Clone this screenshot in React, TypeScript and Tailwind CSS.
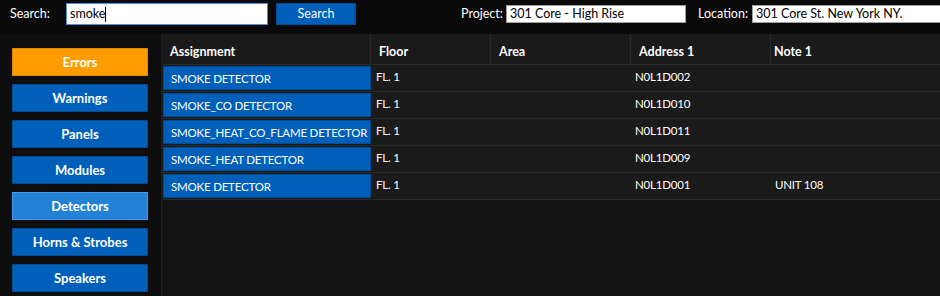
const navItems = [
  { label: 'Errors', kind: 'error' },
  { label: 'Warnings', kind: 'normal' },
  { label: 'Panels', kind: 'normal' },
  { label: 'Modules', kind: 'normal' },
  { label: 'Detectors', kind: 'active' },
  { label: 'Horns & Strobes', kind: 'normal' },
  { label: 'Speakers', kind: 'normal' },
];

const rows = [
  { assignment: 'SMOKE DETECTOR', floor: 'FL. 1', area: '', address: 'N0L1D002', note: '' },
  { assignment: 'SMOKE_CO DETECTOR', floor: 'FL. 1', area: '', address: 'N0L1D010', note: '' },
  { assignment: 'SMOKE_HEAT_CO_FLAME DETECTOR', floor: 'FL. 1', area: '', address: 'N0L1D011', note: '' },
  { assignment: 'SMOKE_HEAT DETECTOR', floor: 'FL. 1', area: '', address: 'N0L1D009', note: '' },
  { assignment: 'SMOKE DETECTOR', floor: 'FL. 1', area: '', address: 'N0L1D001', note: 'UNIT 108' },
];

function navClass(kind: string) {
  if (kind === 'error') return 'bg-[#ff9c00] border-[#e08a00]';
  if (kind === 'active') return 'bg-[#2382d6] border-[#3f9cf5]';
  return 'bg-[#005fb8] border-[#004c94]';
}

function App() {
  return (
    <div className="w-[940px] h-[296px] overflow-hidden bg-[#0e0e0e] text-white text-[12.5px] font-['Lato','Open_Sans',sans-serif] flex flex-col whitespace-nowrap">
      {/* top bar */}
      <div className="h-[34px] shrink-0 bg-[#0a0a0a] flex items-start pt-[3px] overflow-hidden">
        <div className="shrink-0 ml-[10px] w-[56px] h-[22px] flex items-center">Search:</div>
        <div className="shrink-0 w-[202px] h-[22px] bg-white border border-[#4a90d9] text-black flex items-center pl-[3px]">
          smoke<span className="inline-block w-[1px] h-[15px] bg-black" />
        </div>
        <button className="shrink-0 ml-[8px] w-[80px] h-[22px] bg-[#005fb8] border border-[#004c94] text-white text-[12.5px]">
          Search
        </button>
        <div className="shrink-0 ml-[105px] w-[45px] h-[22px] flex items-center">Project:</div>
        <div className="shrink-0 mt-[2px] w-[180px] h-[18px] bg-white border border-[#a0a0a0] text-black flex items-center pl-[3px]">
          301 Core - High Rise
        </div>
        <div className="shrink-0 ml-[12px] w-[54px] h-[22px] flex items-center">Location:</div>
        <div className="shrink-0 mt-[2px] w-[200px] h-[18px] bg-white border border-[#a0a0a0] text-black flex items-center pl-[3px]">
          301 Core St. New York NY.
        </div>
      </div>

      <div className="flex flex-1 min-h-0">
        {/* sidebar */}
        <div className="w-[162px] shrink-0 border-r border-[#1f1f1f] pt-[14px] pl-[12px] flex flex-col gap-[8px]">
          {navItems.map((item) => (
            <div
              key={item.label}
              className={`w-[136px] h-[28px] border flex items-center justify-center pt-[1px] font-bold text-[13px] ${navClass(item.kind)}`}
            >
              {item.label}
            </div>
          ))}
        </div>

        {/* table */}
        <div className="flex-1 bg-[#131313] flex flex-col">
          <div className="h-[31px] bg-[#1a1a1a] border-b border-[#2a2a2a] flex font-bold text-[12.5px] leading-[18px]">
            <div className="w-[209px] border-r border-[#2a2a2a] pl-[8px] pt-[9px]">Assignment</div>
            <div className="w-[120px] border-r border-[#2a2a2a] pl-[8px] pt-[9px]">Floor</div>
            <div className="w-[140px] border-r border-[#2a2a2a] pl-[8px] pt-[9px]">Area</div>
            <div className="w-[140px] border-r border-[#2a2a2a] pl-[8px] pt-[9px]">Address 1</div>
            <div className="flex-1 pl-[3px] pt-[9px]">Note 1</div>
          </div>
          {rows.map((r, i) => (
            <div key={i} className="h-[27px] bg-[#1b1b1b] border-b border-[#2a2a2a] flex text-[11.5px] tracking-[-0.2px]">
              <div className="w-[209px] pl-[1px] pt-[1px]">
                <div className="h-[24px] bg-[#005fb8] border border-[#004c94] flex items-center pl-[7px] pt-[1px]">
                  {r.assignment}
                </div>
              </div>
              <div className="w-[120px] pl-[5px] pt-[3px]">{r.floor}</div>
              <div className="w-[140px] pl-[5px] pt-[3px]">{r.area}</div>
              <div className="w-[140px] pl-[4px] pt-[3px]">{r.address}</div>
              <div className="flex-1 pl-[4px] pt-[3px]">{r.note}</div>
            </div>
          ))}
        </div>
      </div>
    </div>
  );
}

export default App;
